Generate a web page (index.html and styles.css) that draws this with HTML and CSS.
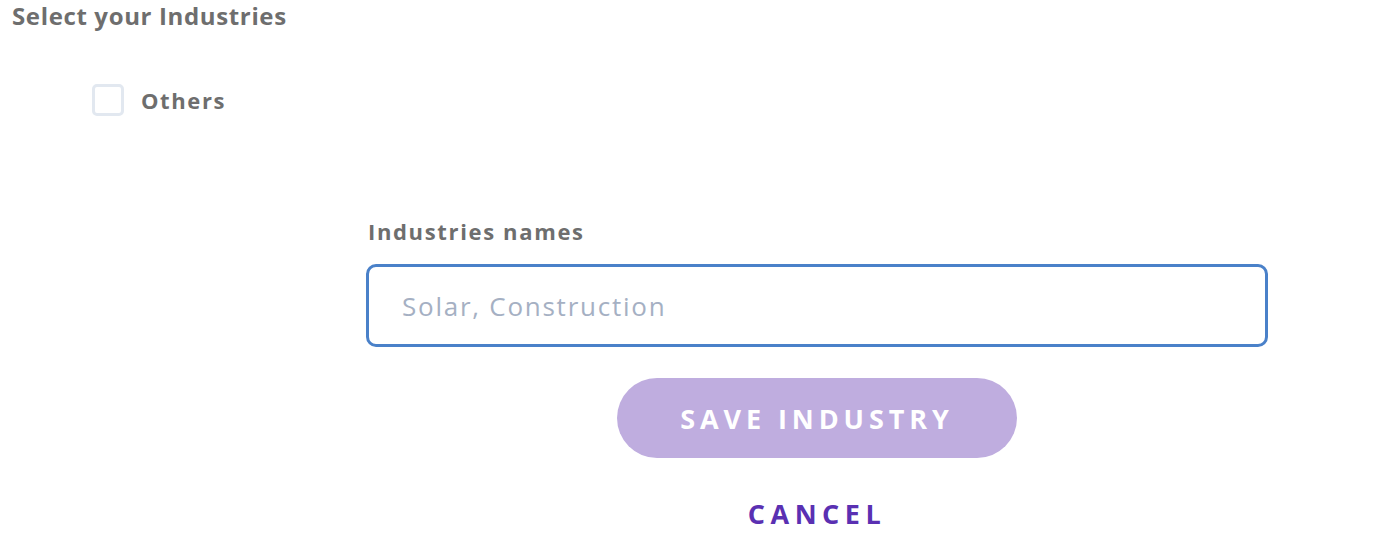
FILE: index.html
```html
<!DOCTYPE html>
<html lang="en">
<head>
<meta charset="utf-8">
<title>Select your Industries</title>
<link rel="stylesheet" href="styles.css">
</head>
<body>
<main class="page">
  <h2 class="title">Select your Industries</h2>
  <label class="check-row">
    <input type="checkbox" class="check-input">
    <span class="check-box"></span>
    <span class="check-text">Others</span>
  </label>
  <form class="form">
    <label class="field-label" for="names">Industries names</label>
    <input id="names" class="field-input" type="text" placeholder="Solar, Construction">
    <button type="button" class="btn-save">SAVE INDUSTRY</button>
    <button type="button" class="btn-cancel">CANCEL</button>
  </form>
</main>
</body>
</html>
```

FILE: styles.css
```css
* { box-sizing: border-box; }
html, body { margin: 0; padding: 0; background: #ffffff; }
body {
  font-family: "Open Sans", "Liberation Sans", sans-serif;
  color: #707070;
}
.page {
  padding: 0 0 0 12px;
  display: flex;
  flex-direction: column;
}
.title {
  margin: 0;
  font-size: 24px;
  line-height: 32px;
  font-weight: 700;
  letter-spacing: 0.64px;
  color: #6e6e6e;
}
.check-row {
  display: flex;
  align-items: center;
  gap: 17px;
  margin: 52px 0 0 80px;
  cursor: pointer;
}
.check-input { display: none; }
.check-box {
  width: 32px;
  height: 32px;
  border: 3px solid #e2e8f0;
  border-radius: 5px;
  background: #fff;
}
.check-text {
  font-size: 22px;
  font-weight: 700;
  letter-spacing: 1.6px;
  color: #6e6e6e;
}
.form {
  margin: 100px 0 0 354px;
  width: 902px;
  display: flex;
  flex-direction: column;
  align-items: center;
}
.field-label {
  align-self: flex-start;
  font-size: 22px;
  line-height: 30px;
  font-weight: 700;
  letter-spacing: 1.65px;
  color: #6e6e6e;
  margin-left: 2px;
}
.field-input {
  margin-top: 18px;
  width: 100%;
  height: 83px;
  border: 3px solid #4a81c9;
  border-radius: 10px;
  padding: 0 0 0 33px;
  font-family: inherit;
  font-size: 26px;
  color: #333;
  outline: none;
}
.field-input::placeholder {
  color: #a5b0c3;
  letter-spacing: 1.75px;
}
.btn-save {
  margin-top: 31px;
  width: 400px;
  height: 80px;
  border: none;
  border-radius: 40px;
  background: #bfaddf;
  color: #ffffff;
  font-family: inherit;
  font-size: 27px;
  font-weight: 700;
  letter-spacing: 4.9px;
  padding: 0;
  cursor: pointer;
}
.btn-cancel {
  margin-top: 37px;
  border: none;
  background: transparent;
  color: #5a30b2;
  font-family: inherit;
  font-size: 27px;
  font-weight: 700;
  letter-spacing: 5.5px;
  padding: 0;
  cursor: pointer;
}
```
